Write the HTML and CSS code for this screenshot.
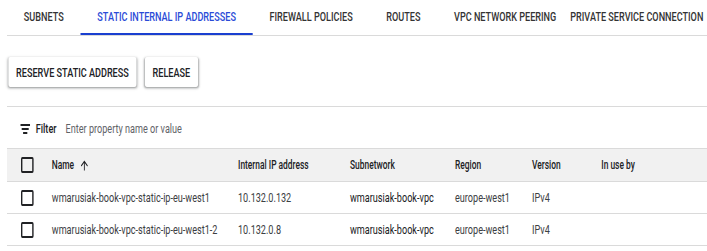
FILE: index.html
```html
<!DOCTYPE html>
<html lang="en">
<head>
  <meta charset="UTF-8">
  <link rel="stylesheet" href="styles.css">
  <title>Static internal IP addresses</title>
</head>
<body>
<div class="page">
  <!-- tabs -->
  <div class="tabs">
    <div class="tab">SUBNETS</div>
    <div class="tab active">STATIC INTERNAL IP ADDRESSES</div>
    <div class="tab">FIREWALL POLICIES</div>
    <div class="tab">ROUTES</div>
    <div class="tab peering">VPC NETWORK PEERING</div>
    <div class="tab last">PRIVATE SERVICE CONNECTION</div>
  </div>

  <!-- actions -->
  <div class="actions">
    <button class="btn">RESERVE STATIC ADDRESS</button>
    <button class="btn">RELEASE</button>
  </div>

  <div class="filter">
    <svg class="filter-icon" viewBox="0 0 14 10" width="14" height="10">
      <rect x="0" y="0" width="14" height="2" fill="#202124"/>
      <rect x="2" y="4" width="10" height="2" fill="#202124"/>
      <rect x="4" y="8" width="6" height="2" fill="#202124"/>
    </svg>
    <span class="filter-label">Filter</span>
    <span class="filter-input">Enter property name or value</span>
  </div>

  <!-- table -->
  <div class="table">
    <div class="row head">
      <div class="cell check"><span class="box"></span></div>
      <div class="cell">Name
        <svg class="sort" viewBox="0 0 24 24" width="15" height="15"><path d="M4 12l1.41 1.41L11 7.83V20h2V7.83l5.58 5.59L20 12l-8-8-8 8z" fill="#202124"/></svg>
      </div>
      <div class="cell">Internal IP address</div>
      <div class="cell">Subnetwork</div>
      <div class="cell">Region</div>
      <div class="cell">Version</div>
      <div class="cell">In use by</div>
    </div>
    <div class="row">
      <div class="cell check"><span class="box"></span></div>
      <div class="cell name">wmarusiak-book-vpc-static-ip-eu-west1</div>
      <div class="cell">10.132.0.132</div>
      <div class="cell subnet">wmarusiak-book-vpc</div>
      <div class="cell">europe-west1</div>
      <div class="cell">IPv4</div>
      <div class="cell"></div>
    </div>
    <div class="row">
      <div class="cell check"><span class="box"></span></div>
      <div class="cell name">wmarusiak-book-vpc-static-ip-eu-west1-2</div>
      <div class="cell">10.132.0.8</div>
      <div class="cell subnet">wmarusiak-book-vpc</div>
      <div class="cell">europe-west1</div>
      <div class="cell">IPv4</div>
      <div class="cell"></div>
    </div>
  </div>
</div>
</body>
</html>
```

FILE: styles.css
```css
html,
body {
  overflow: hidden;
}

body {
  margin: 0;
  background: #fff;
  font-family: Roboto, "Liberation Sans", sans-serif;
  color: #202124;
}

/* the screenshot is squeezed horizontally */
.page {
  width: 1010px;
  transform: scaleX(0.7);
  transform-origin: 0 0;
}

.tabs {
  display: flex;
  height: 36px;
  margin-left: 10px;
  border-bottom: 1px solid #dadada;
  box-sizing: border-box;
  overflow: hidden;
}

.tab {
  height: 35px;
  padding: 0 24px;
  box-sizing: border-box;
  border-bottom: 2px solid transparent;
  display: flex;
  align-items: center;
  font-size: 13px;
  font-weight: 500;
  color: #333;
  white-space: nowrap;
}

.tab.peering {
  padding-right: 20px;
}

.tab.last {
  padding: 0;
}

.tab.active {
  color: #2a4bd7;
  border-bottom-color: #1a3fd0;
}

.actions {
  display: flex;
  gap: 12px;
  padding: 21px 0 19px 2px;
  margin-left: 10px;
  border-bottom: 1px solid #dadada;
}

.btn {
  height: 30px;
  padding: 0 11px;
  border: none;
  border-radius: 3px;
  background: #fff;
  font-family: inherit;
  font-size: 13px;
  font-weight: 500;
  color: #202124;
  box-shadow: 0 1px 2px rgba(60, 64, 67, 0.35), 0 1px 3px 1px rgba(60, 64, 67, 0.18);
}

.filter {
  display: flex;
  align-items: center;
  height: 42px;
  margin-left: 10px;
  padding: 2px 0 0 19px;
  box-sizing: border-box;
  border-bottom: 1px solid #dadada;
  font-size: 13px;
}

.filter-icon {
  margin-right: 8px;
}

.filter-label {
  font-weight: 500;
  margin-right: 13px;
}

.filter-input {
  color: #5f6368;
}

.table {
  margin-left: 10px;
  font-size: 13px;
}

.row {
  display: grid;
  grid-template-columns: 64px 266px 160px 150px 110px 99px 1fr;
  height: 31px;
  align-items: center;
  border-bottom: 1px solid #dadada;
  color: #3c4043;
}

.row.head {
  height: 32px;
  background: #f1f1f1;
  font-size: 12px;
  font-weight: 500;
  color: #202124;
}

.cell {
  display: flex;
  align-items: center;
  white-space: nowrap;
}

.cell.check {
  padding-left: 20px;
}

.box {
  width: 14px;
  height: 12px;
  border: 2px solid #202124;
  border-radius: 2px;
}

.sort {
  margin-left: 7px;
}

.subnet {
  color: #202124;
}
```
